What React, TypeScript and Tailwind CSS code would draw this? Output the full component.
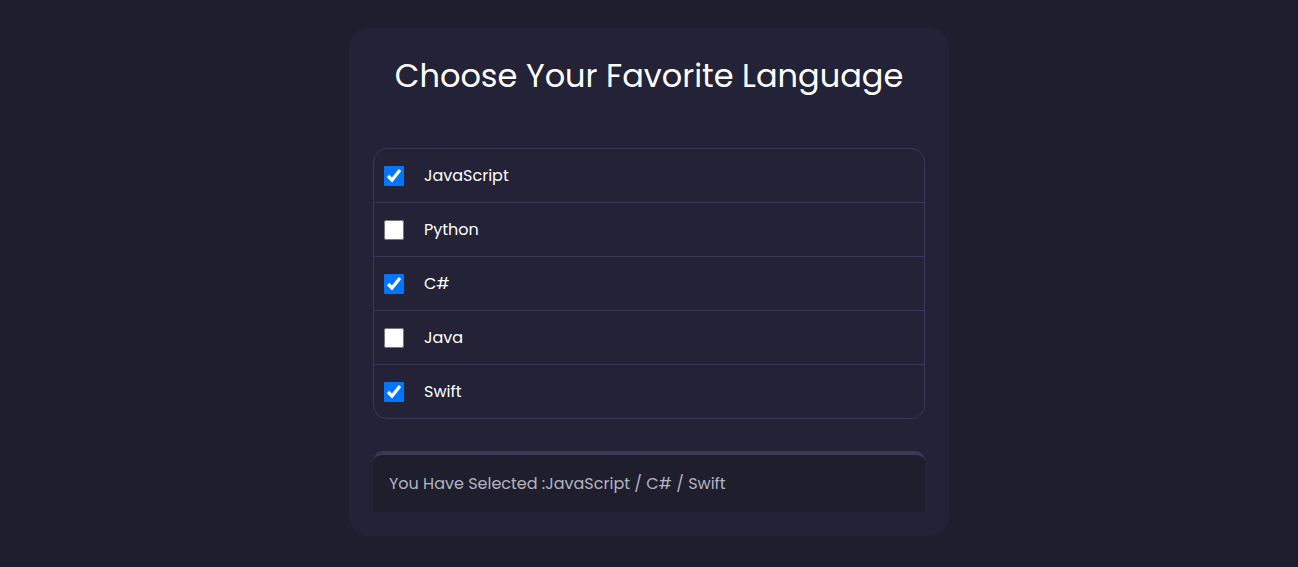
import { useState } from "react";

const LANGUAGES = ["JavaScript", "Python", "C#", "Java", "Swift"];

export default function App() {
  const [selected, setSelected] = useState<string[]>(["JavaScript", "C#", "Swift"]);

  const toggle = (lang: string) => {
    setSelected((prev) =>
      prev.includes(lang) ? prev.filter((l) => l !== lang) : [...prev, lang]
    );
  };

  const picked = LANGUAGES.filter((l) => selected.includes(l));

  return (
    <div
      className="min-h-[567px] bg-[#1f1e2e] flex justify-center pt-[28px]"
      style={{ fontFamily: "Poppins, Inter, 'Noto Sans', sans-serif" }}
    >
      <div className="w-[600px] h-[508px] rounded-[20px] bg-[#232236] px-6 pt-[32px]">
        <h1 className="text-center text-[32px] leading-none text-white">
          Choose Your Favorite Language
        </h1>

        <ul className="mt-[56px] rounded-[14px] border border-[#3a3858] overflow-hidden">
          {LANGUAGES.map((lang) => (
            <li
              key={lang}
              className="h-[54px] flex items-center px-[10px] border-b border-[#3a3858] last:border-b-0 last:h-[53px]"
            >
              <label className="flex items-center gap-5 cursor-pointer w-full h-full">
                <input
                  type="checkbox"
                  checked={selected.includes(lang)}
                  onChange={() => toggle(lang)}
                  className="w-5 h-5 m-0 accent-[#0075ff]"
                />
                <span className="text-white text-[16px] font-normal">{lang}</span>
              </label>
            </li>
          ))}
        </ul>

        <div className="mt-[32px] h-[61px] rounded-t-[10px] border-t-4 border-[#3b3a55] bg-[#1f1e2d] flex items-center px-4">
          <p className="text-[16px] text-[#b4b3c0]">
            You Have Selected :{picked.join(" / ")}
          </p>
        </div>
      </div>
    </div>
  );
}
